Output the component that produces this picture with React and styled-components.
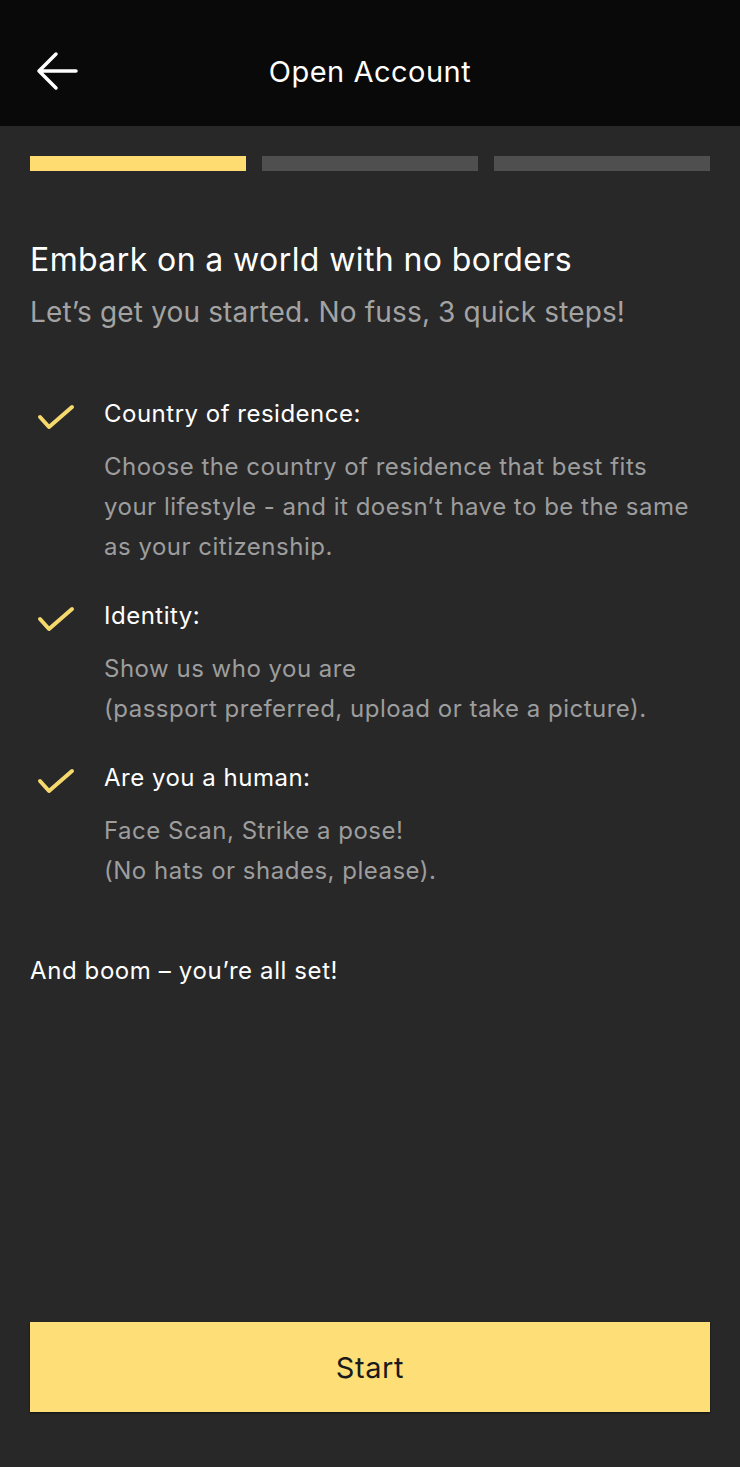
import React from 'react'
import styled, { createGlobalStyle } from 'styled-components'

const GlobalStyle = createGlobalStyle`
  * { box-sizing: border-box; }
  body {
    margin: 0;
    background: #282829;
    font-family: "Inter", "Noto Sans", sans-serif;
  }
`

const Screen = styled.div`
  min-height: 100vh;
  display: flex;
  flex-direction: column;
  background: #282829;
`

const Header = styled.header`
  height: 126px;
  background: #090909;
  display: flex;
  align-items: center;
  padding: 16px 30px 0 36px;
`

const BackButton = styled.button`
  background: none;
  border: 0;
  padding: 0;
  width: 48px;
  height: 48px;
  display: flex;
  align-items: center;
  color: #fff;
  cursor: pointer;
`

const Title = styled.h1`
  flex: 1;
  margin: 0 54px 0 0;
  text-align: center;
  color: #fff;
  font-size: 29px;
  font-weight: 400;
  letter-spacing: 0.5px;
`

const Body = styled.main`
  flex: 1;
  display: flex;
  flex-direction: column;
  padding: 30px 30px 55px;
`

const Progress = styled.div`
  display: grid;
  grid-template-columns: repeat(3, 1fr);
  gap: 16px;
`

const Segment = styled.div`
  height: 15px;
  background: ${p => (p.$active ? '#fedc72' : '#4f4f50')};
`

const Heading = styled.h2`
  margin: 69px 0 12px;
  font-size: 32px;
  line-height: 40px;
  font-weight: 400;
  color: #fff;
  letter-spacing: 0.4px;
`

const Subtitle = styled.p`
  margin: 0 0 62px;
  font-size: 28px;
  line-height: 40px;
  color: #a3a3a3;
  letter-spacing: 0.15px;
`

const Steps = styled.ul`
  list-style: none;
  margin: 0;
  padding: 0;
  display: flex;
  flex-direction: column;
  gap: 29px;
`

const Step = styled.li`
  display: grid;
  grid-template-columns: 74px 1fr;
  padding-right: 12px;
`

const Check = styled.div`
  padding: 10px 0 0 7px;
`

const StepTitle = styled.div`
  font-size: 24px;
  line-height: 40px;
  color: #fff;
  letter-spacing: 0.5px;
  margin-bottom: 13px;
`

const StepText = styled.div`
  font-size: 24px;
  line-height: 40px;
  color: #9d9d9d;
  letter-spacing: 0.5px;
`

const Outro = styled.p`
  margin: 60px 0 0;
  font-size: 24px;
  line-height: 40px;
  color: #fff;
  letter-spacing: 0.6px;
`

const StartButton = styled.button`
  margin-top: auto;
  height: 90px;
  border: 0;
  border-radius: 0;
  background: #fedf77;
  color: #1a1a1a;
  font-family: inherit;
  font-size: 29px;
  letter-spacing: 0.6px;
  cursor: pointer;
  box-shadow: 0 1px 2px rgba(0, 0, 0, 0.6);
`

const CheckIcon = () => (
  <svg width="38" height="26" viewBox="0 0 38 26" fill="none">
    <path d="M3 13 L12 23 L35 3" stroke="#f6d96c" strokeWidth="4" strokeLinecap="round" strokeLinejoin="round" />
  </svg>
)

const steps = [
  {
    title: 'Country of residence:',
    text: ['Choose the country of residence that best fits your lifestyle - and it doesn’t have to be the same as your citizenship.'],
  },
  {
    title: 'Identity:',
    text: ['Show us who you are', '(passport preferred, upload or take a picture).'],
  },
  {
    title: 'Are you a human:',
    text: ['Face Scan, Strike a pose!', '(No hats or shades, please).'],
  },
]

export default function App() {
  return (
    <Screen>
      <GlobalStyle />
      <Header>
        <BackButton aria-label="Back">
          <svg width="44" height="40" viewBox="0 0 44 40" fill="none">
            <path d="M40 20 H3 M20 3 L3 20 L20 37" stroke="#fff" strokeWidth="3.5" strokeLinecap="round" strokeLinejoin="round" />
          </svg>
        </BackButton>
        <Title>Open Account</Title>
      </Header>
      <Body>
        <Progress>
          <Segment $active />
          <Segment />
          <Segment />
        </Progress>
        <Heading>Embark on a world with no borders</Heading>
        <Subtitle>Let’s get you started. No fuss, 3 quick steps!</Subtitle>
        <Steps>
          {steps.map(s => (
            <Step key={s.title}>
              <Check><CheckIcon /></Check>
              <div>
                <StepTitle>{s.title}</StepTitle>
                <StepText>
                  {s.text.map(t => <div key={t}>{t}</div>)}
                </StepText>
              </div>
            </Step>
          ))}
        </Steps>
        <Outro>And boom – you’re all set!</Outro>
        <StartButton>Start</StartButton>
      </Body>
    </Screen>
  )
}
